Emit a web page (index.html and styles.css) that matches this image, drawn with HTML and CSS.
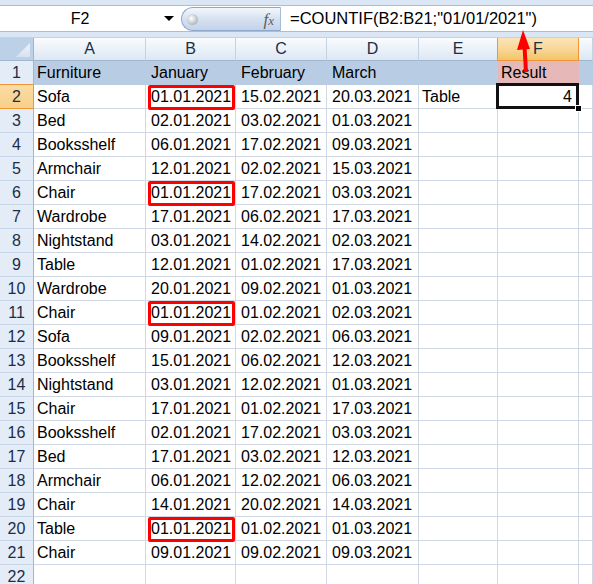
FILE: index.html
```html
<!DOCTYPE html>
<html lang="en">
<head>
  <meta charset="UTF-8">
  <title>COUNTIF</title>
  <link rel="stylesheet" href="styles.css">
</head>
<body>
  <div class="ribbon"></div>
  <div class="formula-bar">
    <div class="name-box">F2</div>
    <div class="name-drop"><span class="caret"></span></div>
    <div class="fx-box"><span class="dot"></span><span class="fx">f<span class="fx-x">x</span></span></div>
    <div class="formula">=COUNTIF(B2:B21;"01/01/2021")</div>
  </div>
  <div class="gap"></div>

  <div class="sheet">
    <div class="row head">
      <div class="corner"></div>
      <div class="col">A</div>
      <div class="col">B</div>
      <div class="col">C</div>
      <div class="col">D</div>
      <div class="col">E</div>
      <div class="col sel">F</div>
      <div class="col"></div>
    </div>
    <div class="row title">
      <div class="num">1</div>
      <div class="c">Furniture</div>
      <div class="c d">January</div>
      <div class="c d">February</div>
      <div class="c d">March</div>
      <div class="c"></div>
      <div class="c result">Result</div>
      <div class="c"></div>
    </div>
    <div class="row">
      <div class="num sel">2</div>
      <div class="c">Sofa</div>
      <div class="c d mark">01.01.2021</div>
      <div class="c d">15.02.2021</div>
      <div class="c d">20.03.2021</div>
      <div class="c">Table</div>
      <div class="c active">4</div>
      <div class="c"></div>
    </div>
    <div class="row">
      <div class="num">3</div>
      <div class="c">Bed</div>
      <div class="c d">02.01.2021</div>
      <div class="c d">03.02.2021</div>
      <div class="c d">01.03.2021</div>
      <div class="c"></div><div class="c"></div><div class="c"></div>
    </div>
    <div class="row">
      <div class="num">4</div>
      <div class="c">Booksshelf</div>
      <div class="c d">06.01.2021</div>
      <div class="c d">17.02.2021</div>
      <div class="c d">09.03.2021</div>
      <div class="c"></div><div class="c"></div><div class="c"></div>
    </div>
    <div class="row">
      <div class="num">5</div>
      <div class="c">Armchair</div>
      <div class="c d">12.01.2021</div>
      <div class="c d">02.02.2021</div>
      <div class="c d">15.03.2021</div>
      <div class="c"></div><div class="c"></div><div class="c"></div>
    </div>
    <div class="row">
      <div class="num">6</div>
      <div class="c">Chair</div>
      <div class="c d mark">01.01.2021</div>
      <div class="c d">17.02.2021</div>
      <div class="c d">03.03.2021</div>
      <div class="c"></div><div class="c"></div><div class="c"></div>
    </div>
    <div class="row">
      <div class="num">7</div>
      <div class="c">Wardrobe</div>
      <div class="c d">17.01.2021</div>
      <div class="c d">06.02.2021</div>
      <div class="c d">17.03.2021</div>
      <div class="c"></div><div class="c"></div><div class="c"></div>
    </div>
    <div class="row">
      <div class="num">8</div>
      <div class="c">Nightstand</div>
      <div class="c d">03.01.2021</div>
      <div class="c d">14.02.2021</div>
      <div class="c d">02.03.2021</div>
      <div class="c"></div><div class="c"></div><div class="c"></div>
    </div>
    <div class="row">
      <div class="num">9</div>
      <div class="c">Table</div>
      <div class="c d">12.01.2021</div>
      <div class="c d">01.02.2021</div>
      <div class="c d">17.03.2021</div>
      <div class="c"></div><div class="c"></div><div class="c"></div>
    </div>
    <div class="row">
      <div class="num">10</div>
      <div class="c">Wardrobe</div>
      <div class="c d">20.01.2021</div>
      <div class="c d">09.02.2021</div>
      <div class="c d">01.03.2021</div>
      <div class="c"></div><div class="c"></div><div class="c"></div>
    </div>
    <div class="row">
      <div class="num">11</div>
      <div class="c">Chair</div>
      <div class="c d mark">01.01.2021</div>
      <div class="c d">01.02.2021</div>
      <div class="c d">02.03.2021</div>
      <div class="c"></div><div class="c"></div><div class="c"></div>
    </div>
    <div class="row">
      <div class="num">12</div>
      <div class="c">Sofa</div>
      <div class="c d">09.01.2021</div>
      <div class="c d">02.02.2021</div>
      <div class="c d">06.03.2021</div>
      <div class="c"></div><div class="c"></div><div class="c"></div>
    </div>
    <div class="row">
      <div class="num">13</div>
      <div class="c">Booksshelf</div>
      <div class="c d">15.01.2021</div>
      <div class="c d">06.02.2021</div>
      <div class="c d">12.03.2021</div>
      <div class="c"></div><div class="c"></div><div class="c"></div>
    </div>
    <div class="row">
      <div class="num">14</div>
      <div class="c">Nightstand</div>
      <div class="c d">03.01.2021</div>
      <div class="c d">12.02.2021</div>
      <div class="c d">01.03.2021</div>
      <div class="c"></div><div class="c"></div><div class="c"></div>
    </div>
    <div class="row">
      <div class="num">15</div>
      <div class="c">Chair</div>
      <div class="c d">17.01.2021</div>
      <div class="c d">01.02.2021</div>
      <div class="c d">17.03.2021</div>
      <div class="c"></div><div class="c"></div><div class="c"></div>
    </div>
    <div class="row">
      <div class="num">16</div>
      <div class="c">Booksshelf</div>
      <div class="c d">02.01.2021</div>
      <div class="c d">17.02.2021</div>
      <div class="c d">03.03.2021</div>
      <div class="c"></div><div class="c"></div><div class="c"></div>
    </div>
    <div class="row">
      <div class="num">17</div>
      <div class="c">Bed</div>
      <div class="c d">17.01.2021</div>
      <div class="c d">03.02.2021</div>
      <div class="c d">12.03.2021</div>
      <div class="c"></div><div class="c"></div><div class="c"></div>
    </div>
    <div class="row">
      <div class="num">18</div>
      <div class="c">Armchair</div>
      <div class="c d">06.01.2021</div>
      <div class="c d">12.02.2021</div>
      <div class="c d">06.03.2021</div>
      <div class="c"></div><div class="c"></div><div class="c"></div>
    </div>
    <div class="row">
      <div class="num">19</div>
      <div class="c">Chair</div>
      <div class="c d">14.01.2021</div>
      <div class="c d">20.02.2021</div>
      <div class="c d">14.03.2021</div>
      <div class="c"></div><div class="c"></div><div class="c"></div>
    </div>
    <div class="row">
      <div class="num">20</div>
      <div class="c">Table</div>
      <div class="c d mark">01.01.2021</div>
      <div class="c d">01.02.2021</div>
      <div class="c d">01.03.2021</div>
      <div class="c"></div><div class="c"></div><div class="c"></div>
    </div>
    <div class="row">
      <div class="num">21</div>
      <div class="c">Chair</div>
      <div class="c d">09.01.2021</div>
      <div class="c d">09.02.2021</div>
      <div class="c d">09.03.2021</div>
      <div class="c"></div><div class="c"></div><div class="c"></div>
    </div>
    <div class="row">
      <div class="num">22</div>
      <div class="c"></div><div class="c"></div><div class="c"></div><div class="c"></div>
      <div class="c"></div><div class="c"></div><div class="c"></div>
    </div>
  </div>

  <svg class="arrow" width="593" height="80" viewBox="0 0 593 80">
    <line x1="524.5" y1="46" x2="526" y2="72" stroke="#ff0000" stroke-width="4"/>
    <polygon points="523,30 517,50 530,49" fill="#ff0000"/>
  </svg>
</body>
</html>
```

FILE: styles.css
```css
body {
  margin: 0;
  font-family: "Liberation Sans", Arial, sans-serif;
  font-size: 16px;
  color: #000;
  background: #fff;
  overflow: hidden;
}
.ribbon {
  height: 5px;
  background: #dbe6f4;
  border-bottom: 1px solid #a9bfd6;
}
.formula-bar {
  display: flex;
  height: 25px;
  background: #fff;
  border-bottom: 1px solid #a7bedb;
}
.name-box {
  width: 160px;
  text-align: center;
  line-height: 26px;
}
.name-drop {
  width: 21px;
  display: flex;
  align-items: center;
  justify-content: center;
}
.caret {
  border-left: 5px solid transparent;
  border-right: 5px solid transparent;
  border-top: 5px solid #000;
  margin-left: -4px;
}
.fx-box {
  position: relative;
  width: 100px;
  margin-top: 1px;
  background: linear-gradient(#f4f7fc, #d3e0f0 55%, #c3d3ea);
  border: 1px solid #8ea8ca;
  border-right-color: #a7bad7;
  border-radius: 12px 0 0 12px;
  box-sizing: border-box;
}
.dot {
  position: absolute;
  left: 5px;
  top: 6px;
  width: 11px;
  height: 11px;
  border-radius: 50%;
  background: radial-gradient(circle at 40% 40%, #fff, #c4c9cf 55%, #8f97a1);
}
.fx {
  position: absolute;
  right: 6px;
  top: 2px;
  font-family: "Liberation Serif", serif;
  font-style: italic;
  font-size: 17px;
  color: #5c5c5c;
}
.fx-x {
  font-size: 13px;
}
.formula {
  flex: 1;
  padding-left: 9px;
  font-size: 16.5px;
  line-height: 25px;
  white-space: nowrap;
}
.gap {
  height: 5px;
  background: #dbe6f4;
  border-bottom: 1px solid #c3d3e6;
}
.row {
  display: grid;
  grid-template-columns: 34px 112px 90px 91px 92px 79px 81px 1fr;
  height: 24px;
}
.row > div {
  box-sizing: border-box;
  border-right: 1px solid #d0d7e5;
  border-bottom: 1px solid #d0d7e5;
  white-space: nowrap;
  overflow: hidden;
}
.row.head {
  height: 23px;
}
.corner {
  position: relative;
  background: #bcd0e8;
  border-right-color: #9eb6ce !important;
  border-bottom-color: #9eb6ce !important;
}
.corner::after {
  content: "";
  position: absolute;
  right: 3px;
  bottom: 3px;
  width: 14px;
  height: 14px;
  background: linear-gradient(#eef3f9, #d7e2ef);
  clip-path: polygon(100% 0, 100% 100%, 0 100%);
}
.col {
  background: linear-gradient(#fafcfe, #e9f0f8 55%, #dde7f3);
  border-right-color: #c4d3e4 !important;
  border-bottom-color: #9eb6ce !important;
  text-align: center;
  line-height: 22px;
  color: #1b2e48;
}
.col.sel {
  background: linear-gradient(#fbe4b8, #f8d594 55%, #f3c466);
  border-right-color: #f29536 !important;
  border-bottom-color: #f29536 !important;
  box-shadow: -1px 0 0 #f29536;
}
.num {
  background: #e4ecf7;
  border-right-color: #9eb6ce !important;
  border-bottom-color: #c5d4e6 !important;
  text-align: center;
  line-height: 23px;
  color: #1b2e48;
}
.num.sel {
  background: linear-gradient(#fbdca4, #f8d08a);
  border-right-color: #f29536 !important;
  border-bottom-color: #f29536 !important;
  box-shadow: 0 -1px 0 #f29536;
}
.c {
  padding-left: 3px;
  line-height: 23px;
}
.c.d {
  padding-left: 5px;
}
.title .c {
  background: #b8cce4;
  border-color: #b8cce4;
}
.title .c.result {
  background: #e6b8b7;
  border-color: #e6b8b7;
}
.mark {
  position: relative;
  overflow: visible !important;
}
.mark::after {
  content: "";
  position: absolute;
  top: 0;
  left: 2px;
  right: 0;
  bottom: -2px;
  border: 3px solid #ff0000;
  border-radius: 2px;
  z-index: 2;
}
.active {
  position: relative;
  overflow: visible !important;
  text-align: right;
  padding-right: 6px;
}
.active::after {
  content: "";
  position: absolute;
  top: -2px;
  left: -2px;
  right: -1px;
  bottom: -1px;
  border: 3px solid #111;
  z-index: 2;
}
.active::before {
  content: "";
  position: absolute;
  right: -4px;
  bottom: -4px;
  width: 5px;
  height: 5px;
  background: #000;
  border: 1px solid #fff;
  z-index: 3;
}
.arrow {
  position: absolute;
  left: 0;
  top: 0;
  pointer-events: none;
}
```
